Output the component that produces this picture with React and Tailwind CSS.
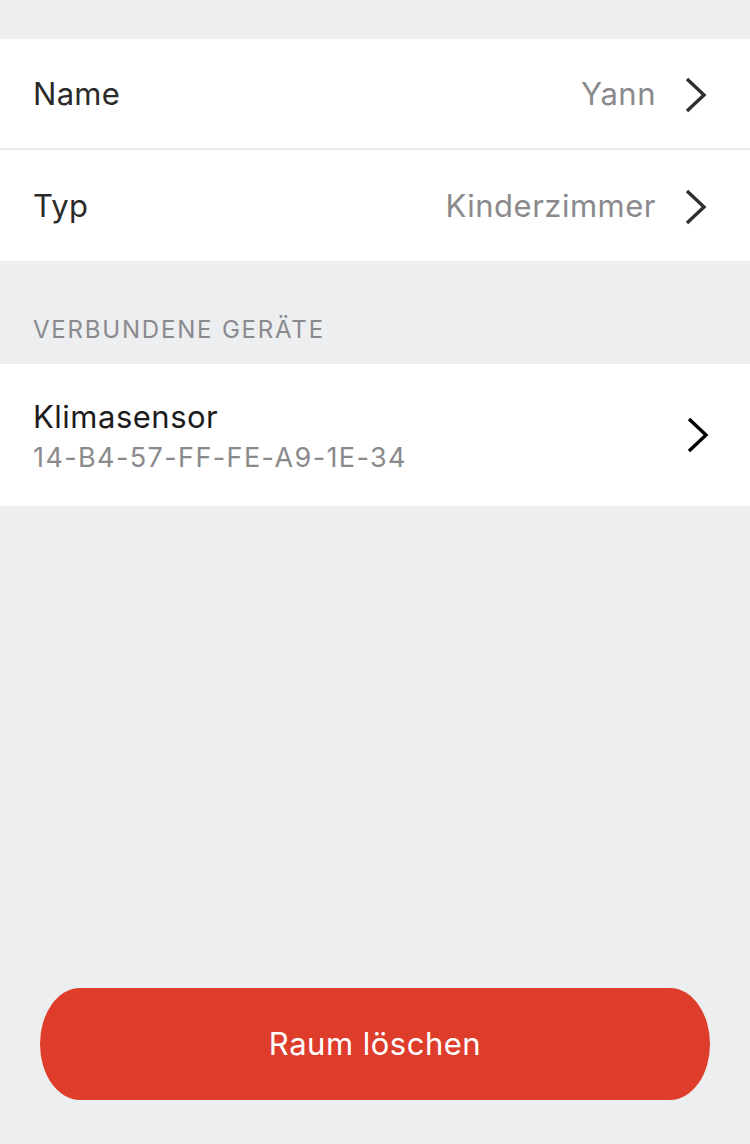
import React from 'react';

function Chevron({ className }) {
  return (
    <svg viewBox="0 0 24 36" className={className} fill="none">
      <path d="M3 2 L20 18 L3 34" stroke="currentColor" strokeWidth="3.4" strokeLinecap="butt" strokeLinejoin="miter" />
    </svg>
  );
}

function Row({ label, value, border }) {
  return (
    <div className={`flex items-center h-[111px] bg-white pl-[33px] pr-[42px] pt-[2px] ${border ? 'border-b-2 border-[#ececee]' : ''}`}>
      <span className="text-[31px] tracking-[0.3px] text-[#2a2a2a] flex-1">{label}</span>
      <span className="text-[31px] tracking-[0.5px] text-[#8a8a8c] mr-[28px]">{value}</span>
      <Chevron className="w-[24px] h-[36px] text-[#2f2f2f]" />
    </div>
  );
}

export default function App() {
  return (
    <div className="w-[750px] h-[1144px] bg-[#edeef0] flex flex-col" style={{ fontFamily: 'Inter, "Noto Sans", sans-serif' }}>
      <div className="h-[39px]" />
      <Row label="Name" value="Yann" border />
      <Row label="Typ" value="Kinderzimmer" />

      <div className="h-[103px] flex items-end pl-[33px] pb-[16px]">
        <span className="text-[24px] text-[#8a8a8e] tracking-[1.8px]">VERBUNDENE GERÄTE</span>
      </div>

      <div className="flex items-center h-[142px] bg-white pl-[33px] pr-[40px]">
        <div className="flex-1 flex flex-col pt-[4px]">
          <span className="text-[31px] tracking-[0.5px] text-[#1c1c1c] leading-[38px]">Klimasensor</span>
          <span className="text-[27px] tracking-[1.4px] text-[#8a8a8c] leading-[36px] mt-[4px]">14-B4-57-FF-FE-A9-1E-34</span>
        </div>
        <Chevron className="w-[24px] h-[38px] text-black" />
      </div>

      <div className="flex-1" />

      <div className="px-[40px] pb-[44px]">
        <button className="w-full h-[112px] bg-[#de3d2c] rounded-[40px/56px] text-white text-[31px] tracking-[0.5px]">
          Raum löschen
        </button>
      </div>
    </div>
  );
}
